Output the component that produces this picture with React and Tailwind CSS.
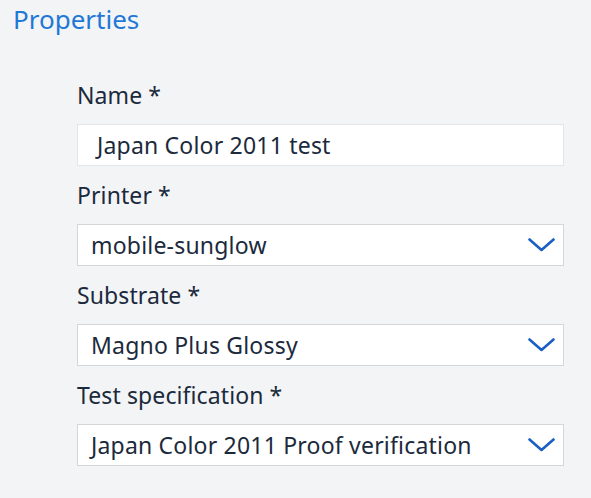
import React from "react";

function Chevron() {
  return (
    <svg width="27" height="14" viewBox="0 0 27 14" className="shrink-0">
      <path d="M1.5 1.5 L13.5 12 L25.5 1.5" fill="none" stroke="#1a5fc4" strokeWidth="2.6" strokeLinecap="round" strokeLinejoin="round" />
    </svg>
  );
}

function Select({ value }) {
  return (
    <div className="mt-[13px] flex items-center h-[42px] bg-white border border-[#d4d6d9] pl-[13px] pr-[8px]">
      <span className="flex-1 text-[23px] tracking-[0.2px] text-[#1b2a3c] whitespace-nowrap">{value}</span>
      <Chevron />
    </div>
  );
}

function Label({ children, first }) {
  return (
    <div className={(first ? "" : "mt-[13px] ") + "text-[23px] leading-[32px] h-[32px] tracking-[0.1px] text-[#1b2a3c] whitespace-nowrap"}>
      {children}
    </div>
  );
}

export default function App() {
  return (
    <div className="w-[591px] h-[498px] bg-[#f3f4f6] font-['Noto_Sans',sans-serif] overflow-hidden">
      <div className="pl-[13px] pt-[2px] text-[26px] text-[#1f78d6] leading-[34px]">Properties</div>
      <div className="ml-[77px] w-[487px] mt-[43px] flex flex-col">
        <Label first>Name *</Label>
        <div className="mt-[13px] h-[42px] bg-white border border-[#e3e5e8] pl-[19px] flex items-center text-[23px] tracking-[0.2px] text-[#1b2a3c]">
          Japan Color 2011 test
        </div>
        <Label>Printer *</Label>
        <Select value="mobile-sunglow" />
        <Label>Substrate *</Label>
        <Select value="Magno Plus Glossy" />
        <Label>Test specification *</Label>
        <Select value="Japan Color 2011 Proof verification" />
      </div>
    </div>
  );
}
